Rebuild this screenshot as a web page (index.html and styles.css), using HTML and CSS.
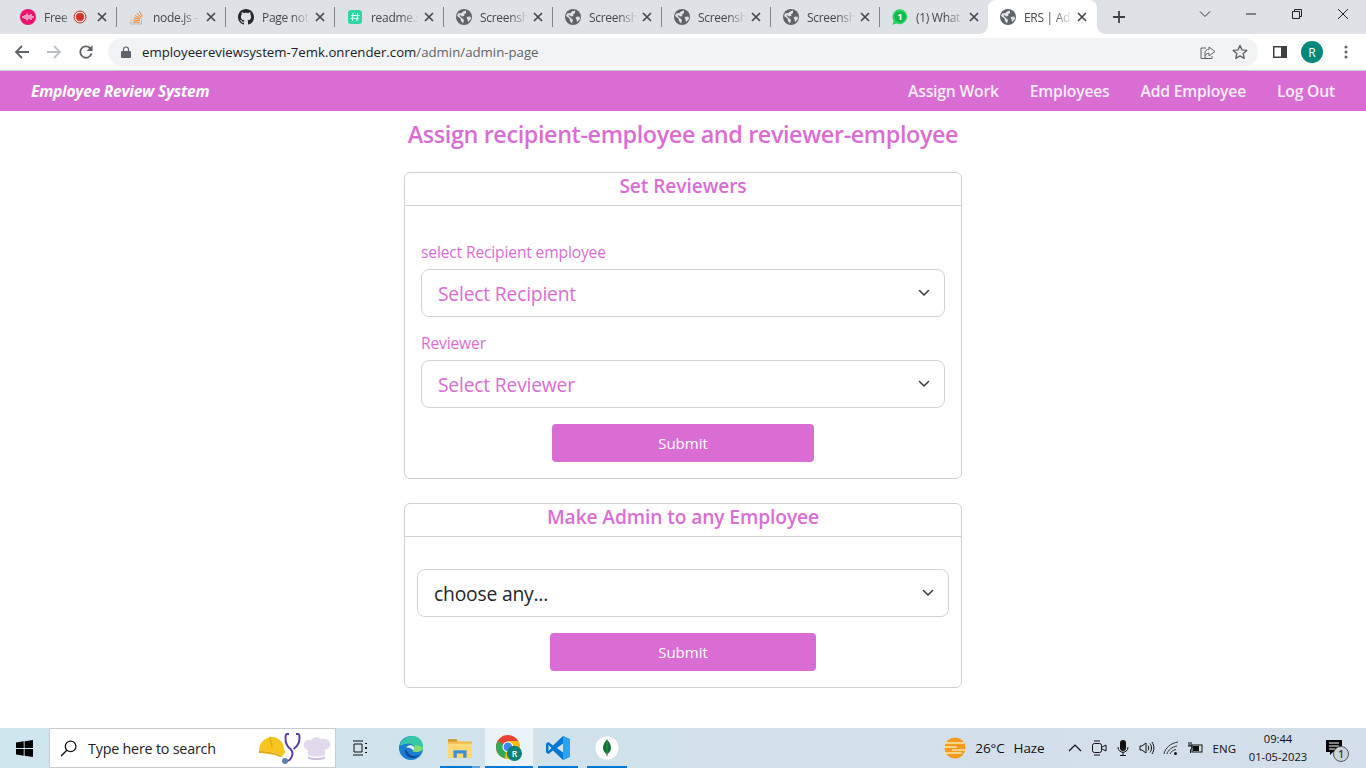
FILE: index.html
```html
<!DOCTYPE html>
<html lang="en">
<head>
<meta charset="utf-8">
<title>ERS | Admin</title>
<link rel="stylesheet" href="styles.css">
</head>
<body>
<svg class="defs" width="0" height="0" aria-hidden="true">
  <symbol id="globe" viewBox="0 0 16 16"><circle cx="8" cy="8" r="8" fill="#5f6368"/><path d="M2 4.500 5.500 4 7 2.500 10 1.500 10 4 8 5.500 8.500 7 6 7.500 5 6.500 3.500 6 4.500 8 6.500 9.500 8 11 7 14.500 5 12 4.500 9.500 1 7ZM10.500 8 14.500 7.500 15 10 12 13 11.500 10.500Z" fill="#dee1e6"/></symbol>
  <symbol id="close" viewBox="0 0 10 10"><path d="M1 1 9 9M9 1 1 9" stroke="#45484c" stroke-width="1.700" fill="none"/></symbol>
  <symbol id="chev" viewBox="0 0 12 12"><path d="M1.500 3.500 6 8l4.500-4.500" stroke="#343a40" stroke-width="1.500" fill="none" stroke-linecap="round" stroke-linejoin="round"/></symbol>
</svg>
<div class="page">
  <header class="chrome">
    <div class="tabstrip">
      <div class="tab">
        <svg class="fav" viewBox="0 0 16 16"><circle cx="8" cy="8" r="8" fill="#e8146e"/><path d="M3 7v2M5 6v4M7 4.500v7M9 6v4M11 5v6M13 7v2" stroke="#fff" stroke-width="1.100"/></svg>
        <span class="tab-title">Free</span>
        <svg class="rec" viewBox="0 0 14 14"><circle cx="7" cy="7" r="6" fill="none" stroke="#d93025" stroke-width="1"/><circle cx="7" cy="7" r="4" fill="#d93025"/></svg>
        <svg class="x"><use href="#close"/></svg>
      </div>
      <div class="tab">
        <svg class="fav" viewBox="0 0 16 16"><path d="M2 10.500V15h10.500v-4.500" fill="none" stroke="#bcbbbb" stroke-width="1.100"/><path d="M4 13.200h6.500M4.200 11l6.300.6M4.800 8.800l6.100 1.500M6 6.500l5.500 2.900M7.800 4.300l4.800 4.200M10.300 2.200l3 5.200" stroke="#f48024" stroke-width="1" fill="none"/></svg>
        <span class="tab-title">node.js -</span>
        <svg class="x"><use href="#close"/></svg>
      </div>
      <div class="tab">
        <svg class="fav" viewBox="0 0 16 16"><path fill="#24292f" d="M8 0C3.580 0 0 3.580 0 8c0 3.540 2.290 6.530 5.470 7.590.4.070.55-.17.55-.38 0-.19-.01-.82-.01-1.490-2.010.37-2.530-.49-2.690-.94-.09-.23-.48-.94-.82-1.130-.28-.15-.68-.52-.01-.53.63-.01 1.080.58 1.230.82.72 1.210 1.870.87 2.330.66.070-.52.28-.87.51-1.070-1.780-.2-3.640-.89-3.640-3.950 0-.87.31-1.590.82-2.150-.08-.2-.36-1.020.08-2.120 0 0 .67-.21 2.200.82.64-.18 1.320-.27 2-.27.68 0 1.360.09 2 .27 1.530-1.040 2.200-.82 2.200-.82.44 1.100.16 1.920.08 2.120.51.56.82 1.270.82 2.150 0 3.070-1.870 3.750-3.650 3.950.29.25.54.73.54 1.480 0 1.070-.01 1.930-.01 2.200 0 .21.15.46.55.38A8.013 8.013 0 0 0 16 8c0-4.420-3.580-8-8-8z"/></svg>
        <span class="tab-title">Page not</span>
        <svg class="x"><use href="#close"/></svg>
      </div>
      <div class="tab">
        <svg class="fav small" viewBox="0 0 14 14"><rect width="14" height="14" rx="3" fill="#2fd6a5"/><path d="M5 3 4.500 11M9.500 3 9 11M3 5.500h8.500M2.500 8.500H11" stroke="#d9fff2" stroke-width="1.100"/></svg>
        <span class="tab-title">readme.s</span>
        <svg class="x"><use href="#close"/></svg>
      </div>
      <div class="tab"><svg class="fav"><use href="#globe"/></svg><span class="tab-title">Screensh</span><svg class="x"><use href="#close"/></svg></div>
      <div class="tab"><svg class="fav"><use href="#globe"/></svg><span class="tab-title">Screensh</span><svg class="x"><use href="#close"/></svg></div>
      <div class="tab"><svg class="fav"><use href="#globe"/></svg><span class="tab-title">Screensh</span><svg class="x"><use href="#close"/></svg></div>
      <div class="tab"><svg class="fav"><use href="#globe"/></svg><span class="tab-title">Screensh</span><svg class="x"><use href="#close"/></svg></div>
      <div class="tab">
        <svg class="fav" viewBox="0 0 16 16"><path d="M8 .3A7.500 7.500 0 0 0 1.600 11.700L.4 15.700l4.100-1.100A7.500 7.500 0 1 0 8 .3Z" fill="#25d366"/><circle cx="8" cy="7.800" r="5.600" fill="#12b84d"/><text x="8" y="11.200" class="wa-num">1</text></svg>
        <span class="tab-title">(1) What</span>
        <svg class="x"><use href="#close"/></svg>
      </div>
      <div class="tab tab-active"><svg class="fav"><use href="#globe"/></svg><span class="tab-title">ERS | Ad</span><svg class="x"><use href="#close"/></svg></div>
      <svg class="newtab" viewBox="0 0 12 12"><path d="M6 0v12M0 6h12" stroke="#3c4043" stroke-width="1.800"/></svg>
      <div class="winctl">
        <span class="winbtn"><svg class="wicon" viewBox="0 0 12 12"><path d="M1 3.500 6 8.500l5-5" stroke="#333" fill="none"/></svg></span>
        <span class="winbtn"><svg class="wicon" viewBox="0 0 12 12"><path d="M1 6h10" stroke="#222" fill="none"/></svg></span>
        <span class="winbtn"><svg class="wicon" viewBox="0 0 12 12"><path d="M3.500 3V1.500h7v7H9M1.500 3.500h7v7h-7z" stroke="#222" fill="none"/></svg></span>
        <span class="winbtn"><svg class="wicon" viewBox="0 0 12 12"><path d="M1 1l10 10M11 1 1 11" stroke="#222" fill="none"/></svg></span>
      </div>
    </div>
    <div class="toolbar">
      <svg class="tb-icon" viewBox="0 0 16 16"><path d="M15 8H2M8 2 2 8l6 6" stroke="#5f6368" stroke-width="1.800" fill="none"/></svg>
      <svg class="tb-icon" viewBox="0 0 16 16"><path d="M1 8h13M8 2l6 6-6 6" stroke="#bdc1c6" stroke-width="1.800" fill="none"/></svg>
      <svg class="tb-icon" viewBox="0 0 16 16"><path d="M13.500 9.500A5.700 5.700 0 1 1 12 4l1.800 1.800" stroke="#5f6368" stroke-width="1.800" fill="none"/><path d="M14.500 1v6h-6z" fill="#5f6368"/></svg>
      <div class="omnibox">
        <svg class="lock" viewBox="0 0 10 12"><path d="M2.500 5V3.500a2.500 2.500 0 0 1 5 0V5" stroke="#5f6368" stroke-width="1.200" fill="none"/><rect y="5" width="10" height="7" rx="1" fill="#5f6368"/></svg>
        <span class="url">employeereviewsystem-7emk.onrender.com<span class="url-path">/admin/admin-page</span></span>
        <svg class="omni-icon share" viewBox="0 0 16 16"><path d="M5 14V8.500C5 6.500 6.500 5.500 9 5.500V3l6 4.500-6 4.500V9.200C7.500 9.200 6 10 5 12" stroke="#5f6368" fill="none"/><path d="M6 4H1v10.500h11V12" stroke="#5f6368" fill="none"/></svg>
        <svg class="omni-icon star" viewBox="0 0 16 16"><path d="M8 1.500l2 4.400 4.800.5-3.600 3.200 1 4.700L8 11.900l-4.200 2.400 1-4.700L1.200 6.400 6 5.900z" stroke="#5f6368" stroke-width="1.400" fill="none" stroke-linejoin="round"/></svg>
      </div>
      <svg class="side" viewBox="0 0 14 12"><rect x=".75" y=".75" width="12.500" height="10.500" fill="none" stroke="#3c4043" stroke-width="1.500"/><rect x="8" y="1" width="5" height="10" fill="#3c4043"/></svg>
      <span class="avatar">R</span>
      <svg class="dots" viewBox="0 0 4 14"><circle cx="2" cy="2" r="1.500" fill="#5f6368"/><circle cx="2" cy="7" r="1.500" fill="#5f6368"/><circle cx="2" cy="12" r="1.500" fill="#5f6368"/></svg>
    </div>
  </header>

  <nav class="navbar">
    <a class="brand">Employee Review System</a>
    <div class="nav-links">
      <a>Assign Work</a>
      <a>Employees</a>
      <a>Add Employee</a>
      <a>Log Out</a>
    </div>
  </nav>

  <main class="content">
    <h1 class="page-title">Assign recipient-employee and reviewer-employee</h1>

    <section class="card">
      <h2 class="card-title">Set Reviewers</h2>
      <form class="card-body">
        <label class="field-label">select Recipient employee</label>
        <div class="select-wrap">
          <select class="select"><option>Select Recipient</option></select>
          <svg class="chevron"><use href="#chev"/></svg>
        </div>
        <label class="field-label second">Reviewer</label>
        <div class="select-wrap">
          <select class="select"><option>Select Reviewer</option></select>
          <svg class="chevron"><use href="#chev"/></svg>
        </div>
        <button type="button" class="submit">Submit</button>
      </form>
    </section>

    <section class="card">
      <h2 class="card-title">Make Admin to any Employee</h2>
      <form class="card-body admin-body">
        <div class="select-wrap">
          <select class="select dark"><option>choose any...</option></select>
          <svg class="chevron"><use href="#chev"/></svg>
        </div>
        <button type="button" class="submit wide">Submit</button>
      </form>
    </section>
  </main>

  <footer class="taskbar">
    <span class="start"><svg viewBox="0 0 17 17" class="winlogo"><path d="M0 2.400 7.700 1.300V8H0zM8.600 1.200 17 0v8H8.600zM0 9h7.700v6.700L0 14.600zM8.600 9H17v8l-8.400-1.200z" fill="#000"/></svg></span>
    <div class="search">
      <svg class="search-icon" viewBox="0 0 16 16"><circle cx="10" cy="6" r="5" fill="none" stroke="#111" stroke-width="1.200"/><path d="M6.400 9.600 1 15" stroke="#111" stroke-width="1.300"/></svg>
      <span class="search-text">Type here to search</span>
      <svg class="search-art" viewBox="0 0 74 34"><path d="M1 20C1 11 8 6 14 6c7 0 12 6 12 12l1.500 3-3 4C17 21 8 20 1 20Z" fill="#f7c520"/><path d="M1 20c7 0 16 1 23.500 5l-2 1C15 23 7 22 1 22Z" fill="#e6a817"/><path d="M12 6l2 10" stroke="#e6a817" stroke-width="1.500"/><path d="M31 3h-2c-1.500 0-1.500 2-1.500 4 0 5 2 9 5 11 3 3 2 7 0 10-1 1.500-3 2-4.500 2" fill="none" stroke="#5b3f9e" stroke-width="2"/><path d="M38 3h2c1.500 0 1.500 2 1.500 4 0 5-3 9-6 11" fill="none" stroke="#5b3f9e" stroke-width="2"/><circle cx="27" cy="30" r="3" fill="#5a7fb0"/><path d="M50 24v-5c-4-1-5-4-4-7 1-3 5-4 7-3 2-3 7-4 10-1 3-1 8 0 9 4 1 4-2 6-5 7v5c-5 2-12 2-17 0Z" fill="#e3d9ec"/><path d="M50 25.500c5 2 12 2 17 0v2c-5 2-12 2-17 0Z" fill="#c9bddb"/></svg>
    </div>
    <div class="apps">
      <span class="app plain"><svg class="app-icon taskview" viewBox="0 0 16 16"><path d="M1 1h10M1 15h10M2 4h8v8H2z" stroke="#111" fill="none"/><path d="M13 3h2v1h-2zM13 7h2v2h-2zM13 12h2v1h-2z" fill="#111"/></svg></span>
      <span class="app plain"><svg class="app-icon big" viewBox="0 0 24 24"><circle cx="12" cy="12" r="12" fill="#1b7fd1"/><path d="M1 9C3 2 10 0 14 0c6 0 10 5 10 11 0 4-4 5-7 5-2 0-3-1-3-2 2-1 2-3 1-4-2-3-6-3-9-2-2 .5-4 2-5 1Z" fill="#37c9a6"/><path d="M24 12c0 2-3 4-7 4-3 0-4-1-3-2 2-1 2-3 1-4 3-1 8 0 9 2Z" fill="#7de06c"/><path d="M6 13c-1 5 3 9 8 9 2 0 5-1 6-3-4 2-8 1-10-1-2-2-2-4-4-5Z" fill="#0c4a9e"/><path d="M7 12c1-3 6-4 8-1 1 2 0 3-1 3-2-2-5-3-7-2Z" fill="#e8f4fb"/></svg></span>
      <span class="app under split"><svg class="app-icon big" viewBox="0 0 22 18"><path d="M0 1h8l1.500 2H22v15H0z" fill="#f3b843"/><path d="M0 5h22v13H0z" fill="#fcd975"/><path d="M0 1h8v2H0z" fill="#c99a2e"/><path d="M5 11h12v7h-3v-4H8v4H5z" fill="#3a8fd6"/></svg></span>
      <span class="app under active"><svg class="app-icon chrome-icon" viewBox="0 0 24 24"><circle cx="11" cy="11" r="11" fill="#ea4335"/><path d="M11 11 1.500 5.500A11 11 0 0 0 8 21.600Z" fill="#34a853"/><path d="M11 5.500h9.500A11 11 0 0 1 8 21.600Z" fill="#fbbc05"/><circle cx="11" cy="11" r="5" fill="#fff"/><circle cx="11" cy="11" r="4" fill="#4285f4"/><circle cx="17" cy="17" r="7" fill="#0b8276"/><text x="17" y="20" class="chrome-r">R</text></svg></span>
      <span class="app under"><svg class="app-icon big" viewBox="0 0 24 24"><path d="M17 0 24 3.200V20.800L17 24 7 14.500 2.500 18 0 16.500V7.500L2.500 6 7 9.500Z" fill="#0078d4"/><path d="M17 0 24 3.200V20.800L17 24Z" fill="#2aa4f4"/><path d="M2.500 9 5.500 12 2.500 15ZM17 7.500V16.500L11 12Z" fill="#d3e4ee"/></svg></span>
      <span class="app under"><svg class="app-icon big" viewBox="0 0 24 24"><circle cx="12" cy="12" r="11.500" fill="#fff"/><path d="M12 3.500c3 3 4 6 4 8.500 0 3-2 5-3.500 6l-.5 2.500-.5-2.500C10 17 8 15 8 12c0-2.500 1-5.500 4-8.500Z" fill="#13703c"/><path d="M12 3.500V20" stroke="#3fa037" stroke-width=".8"/></svg></span>
    </div>
    <div class="tray">
      <div class="weather">
        <svg class="sun" viewBox="0 0 24 24"><circle cx="12" cy="12" r="10.500" fill="#f59a1c"/><path d="M2 7h19M0 11h14M9 14h14M1 17h18" stroke="#fbe7b0" stroke-width="1.500"/></svg>
        <span>26°C</span><span class="haze">Haze</span>
      </div>
      <svg class="caret" viewBox="0 0 14 8"><path d="M1 7l6-6 6 6" stroke="#111" stroke-width="1.200" fill="none"/></svg>
      <svg class="ticon" viewBox="0 0 16 16"><rect x="1.500" y="3.500" width="9" height="9" rx="2" fill="none" stroke="#111"/><path d="M11 7l4-2v6l-4-2M3 1h6M3 15h6" stroke="#111" fill="none"/></svg>
      <svg class="ticon" viewBox="0 0 16 16"><rect x="5" y="0" width="6" height="11" rx="3" fill="#111"/><path d="M3 7c0 7 10 7 10 0M8 12v3M5 15.500h6" stroke="#111" fill="none"/></svg>
      <svg class="ticon" viewBox="0 0 16 16"><path d="M1 6h2l4-3v10l-4-3H1z" fill="none" stroke="#111"/><path d="M9 5.500c1 1.500 1 3.500 0 5M11 3.500c2 3 2 6 0 9M13 2c2.500 4 2.500 8 0 12" stroke="#111" fill="none"/></svg>
      <svg class="ticon" viewBox="0 0 16 16"><path d="M1 14C2 8 8 3 15 2M4 14c1-4 5-7 10-8M7 14c.5-2 3-4 6-4.500" stroke="#333" fill="none"/><circle cx="12.500" cy="13.500" r="1.500" fill="#111"/></svg>
      <svg class="ticon" viewBox="0 0 16 16"><rect x="5" y="5" width="10" height="7" fill="none" stroke="#111"/><rect x="6" y="6" width="6" height="5" fill="#111"/><path d="M2 2v4M4 2v4M1 6h4v2l-1.500 1.500V13" stroke="#111" fill="none"/></svg>
      <span class="lang">ENG</span>
      <div class="clock"><span>09:44</span><span>01-05-2023</span></div>
      <div class="notif">
        <svg class="notif-icon" viewBox="0 0 16 16"><path d="M0 0h16v12H7l-3 3v-3H0z" fill="#000"/><path d="M3 3h10M3 6h10M3 9h6" stroke="#fff"/></svg>
        <span class="notif-badge">1</span>
      </div>
    </div>
  </footer>
</div>
</body>
</html>
```

FILE: styles.css
```css
* { box-sizing: border-box; }
html, body { margin: 0; height: 100%; }
body { font-family: "Open Sans", "Noto Sans", sans-serif; background: #fff; overflow: hidden; }
.defs { position: absolute; }
.page { height: 768px; display: flex; flex-direction: column; }
svg { display: block; flex: none; }

/* browser chrome */
.chrome { flex: none; height: 71px; border-bottom: 1px solid #c9cacc; }
.tabstrip { height: 34px; background: #dee1e6; padding-left: 8px; display: flex; align-items: center; }
.tab { position: relative; width: 109px; height: 34px; display: flex; align-items: center; padding: 0 10px 0 12px; font-size: 12px; color: #45484c; letter-spacing: -.3px; }
.tab::after { content: ""; position: absolute; right: 0; top: 7px; height: 20px; width: 1px; background: #80868b; }
.tab:nth-child(9)::after { display: none; }
.tab-active { background: #fff; border-radius: 8px 8px 0 0; margin-left: -1px; }
.tab-active::before, .tab-active::after { content: ""; display: block; position: absolute; top: auto; bottom: 0; width: 8px; height: 8px; }
.tab-active::before { left: -8px; background: radial-gradient(circle at 0 0, transparent 7.500px, #fff 8px); }
.tab-active::after { left: auto; right: -8px; background: radial-gradient(circle at 100% 0, transparent 7.500px, #fff 8px); }
.fav { width: 16px; height: 16px; margin-right: 8px; }
.fav.small { width: 14px; height: 14px; margin: 0 9px 0 1px; }
.wa-num { font-size: 9.500px; font-weight: 700; fill: #fff; text-anchor: middle; letter-spacing: 0; }
.tab-title { flex: 1; min-width: 0; white-space: nowrap; overflow: hidden; -webkit-mask-image: linear-gradient(90deg, #000 62%, transparent 100%); mask-image: linear-gradient(90deg, #000 62%, transparent 100%); }
.rec { width: 14px; height: 14px; margin-right: 5px; }
.x { width: 10px; height: 10px; margin-left: 5px; }
.newtab { width: 12px; height: 12px; margin-left: 16px; }
.winctl { margin-left: auto; display: flex; height: 34px; }
.winbtn { width: 46px; display: flex; align-items: center; justify-content: center; padding-bottom: 6px; }
.wicon { width: 12px; height: 12px; }

.toolbar { height: 36px; background: #fff; display: flex; align-items: center; padding-left: 14px; }
.tb-icon { width: 16px; height: 16px; margin-right: 16px; }
.omnibox { width: 1150px; height: 28px; margin-left: -2px; border-radius: 14px; background: #f1f3f4; display: flex; align-items: center; padding-left: 13px; }
.lock { width: 10px; height: 12px; margin-right: 11px; }
.url { font-size: 13.230px; color: #202124; letter-spacing: 0; }
.url-path { color: #5f6368; }
.omni-icon { width: 16px; height: 16px; margin-right: 16px; }
.share { margin-left: auto; }
.omni-icon.star { margin-right: 10px; }
.side { width: 14px; height: 12px; margin-left: 15px; }
.avatar { width: 22px; height: 22px; margin-left: 14px; border-radius: 50%; background: #00897b; color: #fff; font-size: 12px; display: flex; align-items: center; justify-content: center; }
.dots { width: 4px; height: 14px; margin-left: 21px; }

/* app nav */
.navbar { flex: none; height: 40px; background: #da6dd4; display: flex; align-items: center; justify-content: space-between; padding: 0 31px; color: #fff; }
.brand { font-size: 15.600px; font-weight: 700; font-style: italic; letter-spacing: -.25px; color: #fff; }
.nav-links { display: flex; gap: 31px; font-size: 15.700px; font-weight: 600; letter-spacing: -.2px; color: #f9eef8; }

/* content */
.content { flex: 1; min-height: 0; display: flex; flex-direction: column; align-items: center; color: #da6dd4; }
.page-title { margin: 6px 0 21px; font-size: 23.400px; line-height: 34px; font-weight: 600; letter-spacing: -.4px; }
.card { width: 558px; border: 1px solid #cfd0d4; border-radius: 6px; margin-bottom: 24px; }
.card-title { margin: 0; height: 33px; line-height: 25px; border-bottom: 1px solid #cfd0d4; text-align: center; font-size: 19.200px; font-weight: 600; letter-spacing: -.1px; }
.card-body { display: flex; flex-direction: column; padding: 29px 16px 16px; }
.field-label { font-size: 15.600px; line-height: 34px; font-weight: 500; letter-spacing: -.15px; }
.field-label.second { margin-top: 9px; }
.select-wrap { position: relative; }
.select { display: block; width: 100%; height: 48px; appearance: none; -webkit-appearance: none; background: #fff; border: 1px solid #ced4da; border-radius: 8px; padding: 0 16px; font-family: inherit; font-size: 19.300px; letter-spacing: -.2px; color: #da6dd4; }
.select.dark { color: #212529; }
.chevron { position: absolute; right: 15px; top: 18px; width: 12px; height: 12px; pointer-events: none; }
.submit { align-self: center; margin-top: 16px; width: 262px; height: 38px; border: 0; border-radius: 4px; background: #da6dd4; color: #fff; font-family: inherit; font-size: 15px; }
.submit.wide { width: 266px; }
.card-body.admin-body { padding: 32px 12px 16px; }

/* taskbar */
.taskbar { flex: none; height: 40px; background: linear-gradient(90deg, #cfe6ee, #d2e0ea 60%, #d3deeb); display: flex; align-items: center; font-size: 13px; color: #111; }
.start { width: 49px; display: flex; justify-content: center; }
.winlogo { width: 17px; height: 17px; }
.search { width: 287px; height: 40px; background: #fff; border: 1px solid #c6cdd2; display: flex; align-items: center; padding-left: 10px; }
.search-icon { width: 17px; height: 17px; margin-right: 11px; }
.search-text { font-size: 14.300px; letter-spacing: -.2px; color: #222; }
.search-art { width: 74px; height: 34px; margin-left: auto; margin-right: 3px; }
.apps { display: flex; gap: 1px; margin-left: 2px; height: 40px; }
.app { position: relative; width: 48px; height: 40px; display: flex; align-items: center; justify-content: center; }
.under::after { content: ""; position: absolute; left: 4px; right: 4px; bottom: 0; height: 2px; background: #0078d4; }
.split::after { background: linear-gradient(90deg, #0078d4 80%, #5ea4dc 80%); }
.active { background: #e9f3f8; }
.active::after { left: 0; right: 0; }
.app-icon { width: 24px; height: 24px; }
.taskview { width: 16px; height: 16px; margin-right: 4px; }
.app-icon.big { width: 24px; height: 24px; }
.chrome-icon { width: 26px; height: 26px; }
.chrome-r { font-size: 8px; font-weight: 600; fill: #fff; text-anchor: middle; }
.tray { margin-left: auto; display: flex; align-items: center; height: 40px; padding-right: 18px; }
.weather { display: flex; align-items: center; font-size: 13.500px; letter-spacing: -.1px; margin-right: 23px; }
.sun { width: 24px; height: 24px; margin-right: 8px; }
.haze { margin-left: 9px; }
.caret { width: 14px; height: 8px; margin-right: 9px; }
.ticon { width: 16px; height: 16px; margin-right: 8px; }
.lang { font-size: 11.500px; margin: 0 11px 0 2px; }
.clock { display: flex; flex-direction: column; align-items: center; width: 62px; font-size: 11.200px; line-height: 18px; }
.notif { position: relative; width: 24px; height: 24px; margin-left: 15px; }
.notif-icon { width: 16px; height: 16px; margin: 4px 0 0 2px; }
.notif-badge { position: absolute; left: 9px; top: 10px; width: 16px; height: 16px; border-radius: 50%; background: #c9d4dc; border: 1px solid #555; font-size: 10px; line-height: 14px; text-align: center; color: #333; font-weight: 600; }
```
